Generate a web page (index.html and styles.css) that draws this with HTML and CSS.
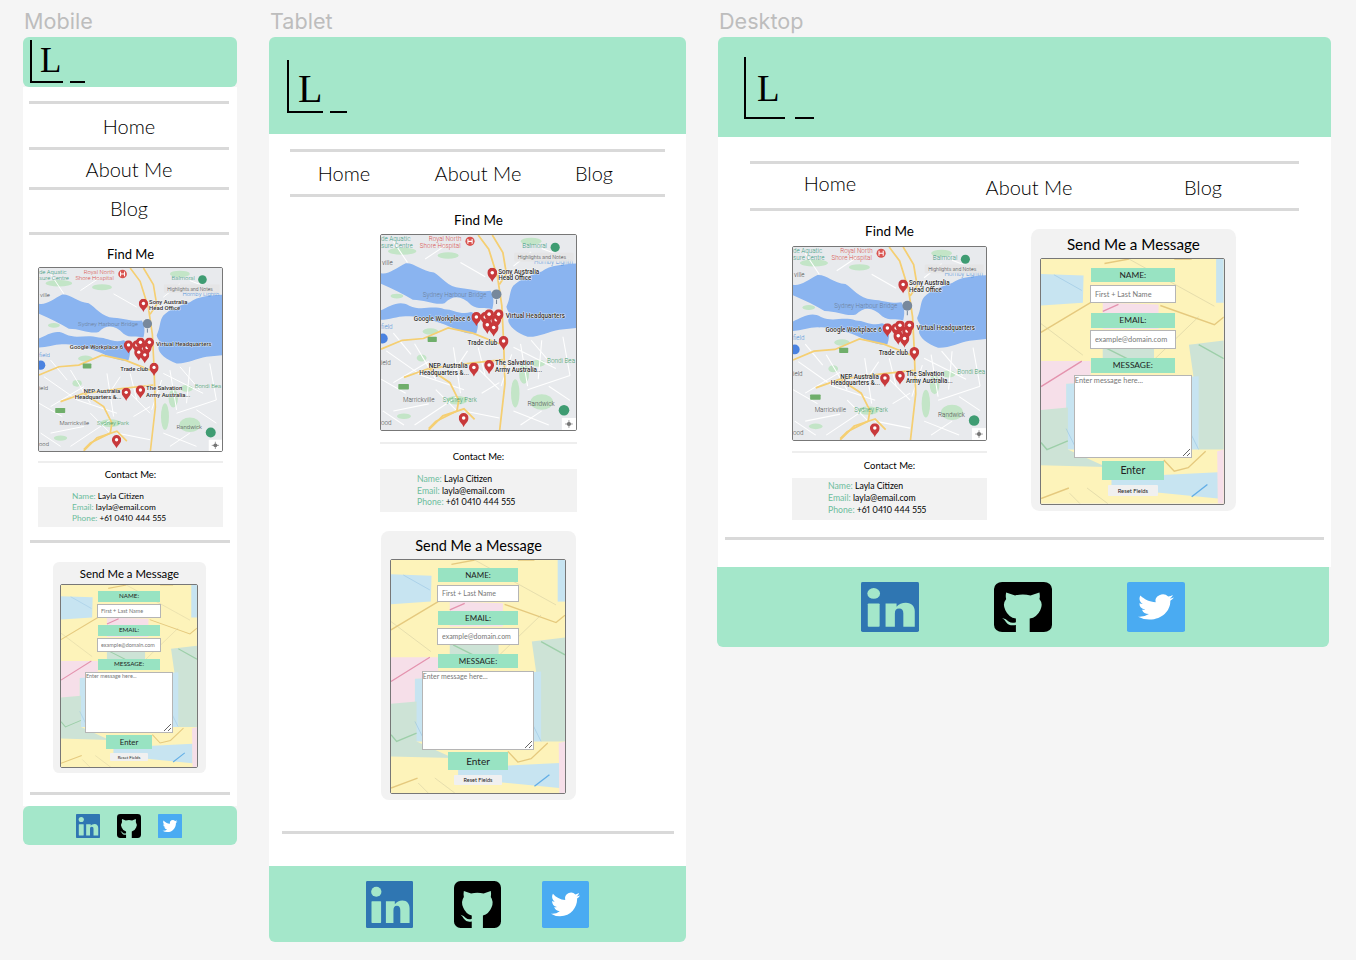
FILE: index.html
```html
<!DOCTYPE html>
<html lang="en">
<head>
  <meta charset="UTF-8" />
  <title>Portfolio wireframes</title>
  <link rel="stylesheet" href="styles.css">
</head>
<body>

  <!-- shared drawings -->
  <svg class="defs" width="0" height="0" aria-hidden="true">
    <filter id="soft"><feGaussianBlur stdDeviation="1.2"/></filter>

    <symbol id="pin" viewBox="0 0 28 40">
      <path d="M14 40C11 30 0 25 0 14a14 14 0 0 1 28 0C28 25 17 30 14 40z" fill="#c8393b"/>
      <circle cx="14" cy="14" r="5" fill="#fff"/>
    </symbol>

    <symbol id="map" viewBox="25 22 552 552" preserveAspectRatio="none">
      <rect x="25" y="22" width="552" height="552" fill="#e8eaed"/>
      <g filter="url(#soft)">
        <!-- parks -->
        <g fill="#c3e5c7">
          <ellipse cx="85" cy="68" rx="40" ry="10"/>
          <ellipse cx="215" cy="80" rx="30" ry="9"/>
          <ellipse cx="450" cy="40" rx="30" ry="10"/>
          <ellipse cx="540" cy="125" rx="25" ry="12"/>
          <ellipse cx="70" cy="195" rx="18" ry="7"/>
          <ellipse cx="165" cy="295" rx="22" ry="9"/>
          <ellipse cx="140" cy="370" rx="14" ry="10"/>
          <ellipse cx="430" cy="415" rx="14" ry="28"/>
          <ellipse cx="405" cy="470" rx="12" ry="40"/>
          <ellipse cx="470" cy="385" rx="20" ry="10"/>
          <ellipse cx="480" cy="495" rx="32" ry="22"/>
          <ellipse cx="240" cy="490" rx="30" ry="12"/>
          <ellipse cx="90" cy="535" rx="20" ry="8"/>
        </g>
        <!-- minor roads -->
        <g fill="none" stroke="#fff" stroke-width="3">
          <path d="M40 350l100 70 120 40M60 440l100-60M120 330l60 100M230 340l20 130M300 400l60 60M400 340l120 60M420 330l20 120M440 460l120-40M400 520l100 40M60 520l100-20M120 560l120-80M450 320l60 70"/>
          <path d="M60 300l50 60M25 430l70 40M270 350l-40 60M300 340l20 80M310 470l50-30M260 520l100 20M395 360l-30 90M480 320l-10 110M540 310l20 110M500 450l60 40M420 560l60-40M30 520l60 40M180 460l60 60"/>
          <path d="M60 40l40 60M150 90l60-40M250 100l70 40M400 110l50-40M480 60l80 30"/>
        </g>
        <!-- water -->
        <g fill="#8ab4f0">
          <path d="M577 103C540 105 505 108 480 125C450 135 420 145 400 165C388 180 392 200 380 225C382 240 398 245 385 262C385 280 410 300 440 310C470 312 500 295 530 290L577 285Z"/>
          <path d="M25 130C45 135 70 115 95 102C120 100 140 125 175 128C195 140 215 170 250 172C285 175 310 185 335 180C345 195 345 215 340 232C320 225 300 235 280 220C255 195 230 190 205 215C180 222 150 205 115 205C90 190 60 175 25 160Z"/>
          <path d="M25 235C50 225 75 205 105 222C140 238 165 220 205 232C230 232 250 250 280 240C300 245 305 270 295 300C270 305 240 290 205 275C170 262 130 250 100 252C75 250 50 262 25 262Z"/>
        </g>
        <!-- main roads -->
        <g fill="none" stroke="#f5cf72" stroke-width="5">
          <path d="M300 22l30 40 25 80 12 80 5 100 4 120-15 132"/>
          <path d="M25 345l60-25 60-5 70-30 70 15 75 30"/>
          <path d="M90 425l70-25 120-15 90-10"/>
          <path d="M160 400l60 40 25 50-5 30-60 30-20 20"/>
          <path d="M160 574l40-40 60-20 30 30"/>
          <path d="M340 22l30 50 10 60-20 30"/>
        </g>
      </g>
      <!-- badges -->
      <rect x="157" y="310" width="26" height="15" rx="2" fill="#6fae6a"/>
      <rect x="74" y="444" width="30" height="15" rx="2" fill="#6fae6a"/>
      <circle cx="277" cy="40" r="13" fill="#d9534f"/>
      <path d="M271 33v14M283 33v14M271 40h12" stroke="#fff" stroke-width="3"/>
      <circle cx="518" cy="57" r="13" fill="#3f9c72"/>
      <circle cx="352" cy="190" r="14" fill="#77889c"/>
      <path d="M352 205v12" stroke="#77889c" stroke-width="3"/>
      <circle cx="30" cy="315" r="14" fill="#4a82e0"/>
      <circle cx="543" cy="518" r="15" fill="#3f9c72"/>
      <!-- place names -->
      <g class="map-label">
        <text x="25" y="40" class="map-teal">de Aquatic</text>
        <text x="25" y="58" class="map-teal">sure Centre</text>
        <text x="160" y="40" class="map-red">Royal North</text>
        <text x="135" y="58" class="map-red">Shore Hospital</text>
        <text x="28" y="108">ville</text>
        <text x="425" y="58" class="map-teal">Balmoral</text>
        <text x="458" y="105" class="map-blue">Hornby Lighth</text>
        <text x="143" y="197" class="map-slate">Sydney Harbour Bridge</text>
        <text x="25" y="289" class="map-blue">field</text>
        <text x="25" y="390">ield</text>
        <text x="495" y="385" class="map-green">Bondi Bea</text>
        <text x="87" y="495">Marrickville</text>
        <text x="200" y="495" class="map-green">Sydney Park</text>
        <text x="440" y="507">Randwick</text>
        <text x="25" y="560">ood</text>
        <text x="357" y="132" class="map-bold">Sony Australia</text>
        <text x="357" y="150" class="map-bold">Head Office</text>
        <text x="118" y="266" class="map-bold">Google Workplace 6</text>
        <text x="378" y="258" class="map-bold">Virtual Headquarters</text>
        <text x="270" y="332" class="map-bold">Trade club</text>
        <text x="160" y="399" class="map-bold">NEP Australia</text>
        <text x="133" y="418" class="map-bold">Headquarters &amp;...</text>
        <text x="348" y="391" class="map-bold">The Salvation</text>
        <text x="348" y="410" class="map-bold">Army Australia...</text>
      </g>
      <!-- pins -->
      <use href="#pin" x="326" y="115" width="28" height="40"/>
      <use href="#pin" x="281" y="240" width="28" height="40"/>
      <use href="#pin" x="306" y="240" width="28" height="40"/>
      <use href="#pin" x="317" y="232" width="28" height="40"/>
      <use href="#pin" x="337" y="248" width="28" height="40"/>
      <use href="#pin" x="344" y="232" width="28" height="40"/>
      <use href="#pin" x="312" y="262" width="28" height="40"/>
      <use href="#pin" x="330" y="270" width="28" height="40"/>
      <use href="#pin" x="358" y="308" width="28" height="40"/>
      <use href="#pin" x="274" y="383" width="28" height="40"/>
      <use href="#pin" x="317" y="376" width="28" height="40"/>
      <use href="#pin" x="245" y="526" width="28" height="40"/>
      <!-- overlays -->
      <rect x="402" y="72" width="168" height="25" rx="3" fill="#e4e4e4" fill-opacity="0.9"/>
      <text x="412" y="90" class="map-note">Highlights and Notes</text>
      <rect x="537" y="540" width="40" height="34" fill="#fff"/>
      <circle cx="557" cy="557" r="6" fill="#777"/>
      <path d="M557 546v22M546 557h22" stroke="#777" stroke-width="2"/>
    </symbol>

    <symbol id="envelopes" viewBox="48 105 524 700" preserveAspectRatio="none">
      <rect x="48" y="105" width="524" height="700" fill="#fdf3ba"/>
      <path d="M550 105h22v125h-22z" fill="#c7e4f1"/>
      <path d="M48 148l122 4-2 78-120 8z" fill="#c7e4f1"/>
      <path d="M225 230l160 5v70H225z" fill="#f6dfe9"/>
      <path d="M225 360h147v30H225z" fill="#cde3d6"/>
      <path d="M472 350l100-12v312h-72l-3-125z" fill="#cde3d6"/>
      <path d="M48 397h142v65h-70v70l-72 7z" fill="#f6dfe9"/>
      <path d="M120 462l380-22v210H120z" fill="#c7e4f1"/>
      <path d="M48 537l77-7v120l110 50-187-5z" fill="#cde3d6"/>
      <path d="M250 730l305-15v75l-305-30z" fill="#c7e4f1"/>
      <path d="M553 655l19-5v155h-17z" fill="#f6dfe9"/>
      <g fill="none" stroke="#e5c97e" stroke-width="4">
        <path d="M48 315l142-85M390 238l155 55 27-22M430 105l50 0M400 680l30 32 40-10 50-47M48 790l80-30M230 118l70-13"/>
      </g>
      <g fill="none" stroke="#cfc9a0" stroke-width="1.5">
        <path d="M300 105l245 135M48 290l120 90M500 270l-125 120M130 775l30 30M180 760l60 45"/>
      </g>
      <g fill="none" stroke="#e493ae" stroke-width="4">
        <path d="M225 255l45-20M48 470l117-73"/>
      </g>
      <g fill="none" stroke="#9dcfa9" stroke-width="4">
        <path d="M48 630l17 20 60-25M235 360l60 30M500 350l72 40"/>
      </g>
      <g fill="none" stroke="#90bfe0" stroke-width="1.5">
        <path d="M85 150l80 45M120 590l30 60M470 590l30 60"/>
      </g>
      <path d="M480 785l45-35" fill="none" stroke="#62aee6" stroke-width="4"/>
    </symbol>

    <symbol id="linkedin" viewBox="0 0 137 140" preserveAspectRatio="none">
      <rect width="137" height="140" rx="4" fill="#2f76b2"/>
      <circle cx="30" cy="32" r="15" fill="#a4e7ca"/>
      <rect x="16" y="60" width="28" height="65" rx="2" fill="#a4e7ca"/>
      <path d="M58 60h26v9c5-7 13-11 22-11 14 0 21 10 21 24v43h-27V88c0-9-3-14-10-14s-10 5-10 14v37H58z" fill="#a4e7ca"/>
    </symbol>

    <symbol id="github" viewBox="0 0 143 142" preserveAspectRatio="none">
      <rect width="143" height="142" rx="20" fill="#000"/>
      <path d="M30 30l22 8q19-5 38 0l22-8q2 12 0 18 10 14 2 32-8 20-26 24v38H54v-20q-16 4-24-8-4-8-10-12 10 2 16 10 8 6 18 2v-10q-18-4-26-24-8-18 2-32-2-8 0-18z" fill="#a4e7ca"/>
    </symbol>

    <symbol id="twitter" viewBox="-7.35 -7.35 38.7 38.7" preserveAspectRatio="none">
      <rect x="-7.35" y="-7.35" width="38.7" height="38.7" rx="1.4" fill="#4aabf2"/>
      <path d="M23.953 4.57a10 10 0 01-2.825.775 4.958 4.958 0 002.163-2.723c-.951.555-2.005.959-3.127 1.184a4.92 4.92 0 00-8.384 4.482C7.69 8.095 4.067 6.13 1.64 3.162a4.822 4.822 0 00-.666 2.475c0 1.71.87 3.213 2.188 4.096a4.904 4.904 0 01-2.228-.616v.06a4.923 4.923 0 003.946 4.827 4.996 4.996 0 01-2.212.085 4.936 4.936 0 004.604 3.417 9.867 9.867 0 01-6.102 2.105c-.39 0-.779-.023-1.17-.067a13.995 13.995 0 007.557 2.209c9.053 0 13.998-7.496 13.998-13.985 0-.21 0-.42-.015-.63A9.935 9.935 0 0024 4.59z" fill="#fff"/>
    </symbol>
  </svg>

  <!-- Mobile -->
  <section class="frame mobile">
    <h2 class="frame-title">Mobile</h2>
    <header class="top">
      <div class="logo"><span class="logo-box">L</span><span class="logo-dash"></span></div>
    </header>
    <div class="page">
      <nav class="nav">
        <a>Home</a>
        <a>About Me</a>
        <a>Blog</a>
      </nav>
      <div class="find">
        <h3>Find Me</h3>
        <svg class="map"><use href="#map"/></svg>
        <h4>Contact Me:</h4>
        <div class="contact">
          <p><span>Name:</span> Layla Citizen</p>
          <p><span>Email:</span> layla@email.com</p>
          <p><span>Phone:</span> +61 0410 444 555</p>
        </div>
      </div>
      <hr class="rule rule-a">
      <div class="card">
        <h3>Send Me a Message</h3>
        <form class="form">
          <svg class="form-bg"><use href="#envelopes"/></svg>
          <label class="label">NAME:</label>
          <input class="input" placeholder="First + Last Name">
          <label class="label">EMAIL:</label>
          <input class="input" placeholder="example@domain.com">
          <label class="label">MESSAGE:</label>
          <textarea class="message" placeholder="Enter message here..."></textarea>
          <button class="enter" type="button">Enter</button>
          <button class="reset" type="button">Reset Fields</button>
        </form>
      </div>
      <hr class="rule rule-b">
    </div>
    <footer class="bottom">
      <svg class="icon"><use href="#linkedin"/></svg>
      <svg class="icon"><use href="#github"/></svg>
      <svg class="icon"><use href="#twitter"/></svg>
    </footer>
  </section>

  <!-- Tablet -->
  <section class="frame tablet">
    <h2 class="frame-title">Tablet</h2>
    <header class="top">
      <div class="logo"><span class="logo-box">L</span><span class="logo-dash"></span></div>
    </header>
    <div class="page">
      <nav class="nav">
        <a>Home</a>
        <a>About Me</a>
        <a>Blog</a>
      </nav>
      <div class="find">
        <h3>Find Me</h3>
        <svg class="map"><use href="#map"/></svg>
        <h4>Contact Me:</h4>
        <div class="contact">
          <p><span>Name:</span> Layla Citizen</p>
          <p><span>Email:</span> layla@email.com</p>
          <p><span>Phone:</span> +61 0410 444 555</p>
        </div>
      </div>
      <div class="card">
        <h3>Send Me a Message</h3>
        <form class="form">
          <svg class="form-bg"><use href="#envelopes"/></svg>
          <label class="label">NAME:</label>
          <input class="input" placeholder="First + Last Name">
          <label class="label">EMAIL:</label>
          <input class="input" placeholder="example@domain.com">
          <label class="label">MESSAGE:</label>
          <textarea class="message" placeholder="Enter message here..."></textarea>
          <button class="enter" type="button">Enter</button>
          <button class="reset" type="button">Reset Fields</button>
        </form>
      </div>
      <hr class="rule rule-b">
    </div>
    <footer class="bottom">
      <svg class="icon"><use href="#linkedin"/></svg>
      <svg class="icon"><use href="#github"/></svg>
      <svg class="icon"><use href="#twitter"/></svg>
    </footer>
  </section>

  <!-- Desktop -->
  <section class="frame desktop">
    <h2 class="frame-title">Desktop</h2>
    <header class="top">
      <div class="logo"><span class="logo-box">L</span><span class="logo-dash"></span></div>
    </header>
    <div class="page">
      <nav class="nav">
        <a>Home</a>
        <a>About Me</a>
        <a>Blog</a>
      </nav>
      <div class="columns">
        <div class="find">
          <h3>Find Me</h3>
          <svg class="map"><use href="#map"/></svg>
          <h4>Contact Me:</h4>
          <div class="contact">
            <p><span>Name:</span> Layla Citizen</p>
            <p><span>Email:</span> layla@email.com</p>
            <p><span>Phone:</span> +61 0410 444 555</p>
          </div>
        </div>
        <div class="card">
          <h3>Send Me a Message</h3>
          <form class="form">
            <svg class="form-bg"><use href="#envelopes"/></svg>
            <label class="label">NAME:</label>
            <input class="input" placeholder="First + Last Name">
            <label class="label">EMAIL:</label>
            <input class="input" placeholder="example@domain.com">
            <label class="label">MESSAGE:</label>
            <textarea class="message" placeholder="Enter message here..."></textarea>
            <button class="enter" type="button">Enter</button>
            <button class="reset" type="button">Reset Fields</button>
          </form>
        </div>
      </div>
      <hr class="rule rule-b">
    </div>
    <footer class="bottom">
      <svg class="icon"><use href="#linkedin"/></svg>
      <svg class="icon"><use href="#github"/></svg>
      <svg class="icon"><use href="#twitter"/></svg>
    </footer>
  </section>

</body>
</html>
```

FILE: styles.css
```css
html, body {
  margin: 0;
  height: 960px;
  overflow: hidden;
}

body {
  position: relative;
  background: #f5f5f5;
  font-family: 'Lato', sans-serif;
  font-weight: 300;
  color: #000;
}

.defs {
  position: absolute;
}

/* artboards sit free on the canvas */
.frame {
  position: absolute;
  top: 8px;
}

.frame-title {
  margin: 0;
  padding-left: 1px;
  height: 29px;
  line-height: 27px;
  font-family: 'Inter', sans-serif;
  font-size: 21.6px;
  font-weight: 400;
  color: #bdbdbd;
}

.top {
  display: flex;
  background: #a4e7ca;
  border-radius: 6px 6px 0 0;
}

.logo {
  display: flex;
  align-items: flex-end;
}

.logo-box {
  display: block;
  box-sizing: border-box;
  border-left: 2px solid #000;
  border-bottom: 2px solid #000;
  font-family: 'Liberation Serif', serif;
  font-weight: 400;
  line-height: 1;
}

.logo-dash {
  display: block;
  height: 2px;
  background: #000;
}

.page {
  box-sizing: border-box;
  background: #fff;
}

.nav {
  font-size: 20px;
  border-top: 3px solid #d9d9d9;
}

.nav a {
  display: flex;
  align-items: center;
  justify-content: center;
}

.find h3,
.card h3 {
  margin: 0;
  font-weight: 400;
  text-align: center;
}

.find h3 {
  font-size: 13.5px;
  line-height: 16px;
}

.map {
  display: block;
  box-sizing: border-box;
  border: 1px solid #777;
  border-radius: 2px;
}

.map-label text {
  font-family: 'Roboto', sans-serif;
  font-size: 18px;
  fill: #4a4a4a;
}

.map-label .map-bold {
  fill: #2c2c2c;
  font-weight: 500;
  paint-order: stroke;
  stroke: #fff;
  stroke-width: 2px;
}

.map-label .map-teal { fill: #3a9a80; }
.map-label .map-red { fill: #d9534f; }
.map-label .map-blue { fill: #4f8fd8; }
.map-label .map-slate { fill: #6c7f98; }
.map-label .map-green { fill: #46a06a; }

.map-note {
  font-family: 'Roboto', sans-serif;
  font-size: 15px;
  fill: #444;
}

.find h4 {
  margin: 0;
  border-top: 2px solid #eee;
  font-size: 9.5px;
  font-weight: 400;
  text-align: center;
}

.contact {
  background: #f2f2f2;
  font-size: 8.7px;
  font-weight: 400;
  font-variant-numeric: proportional-nums;
}

.contact p {
  margin: 0;
}

.contact span {
  color: #6dbd9d;
}

/* form scales with --u */
.card {
  box-sizing: border-box;
  background: #f2f2f2;
  border-radius: calc(var(--u) * 8);
  width: calc(var(--u) * 195);
  height: calc(var(--u) * 269);
  padding-top: calc(var(--u) * 28);
  position: relative;
}

.card h3 {
  position: absolute;
  top: calc(var(--u) * 5);
  left: 0;
  right: 0;
  font-size: calc(var(--u) * 14.5);
  line-height: calc(var(--u) * 20);
}

.form {
  position: relative;
  box-sizing: border-box;
  display: flex;
  flex-direction: column;
  align-items: center;
  width: calc(var(--u) * 176);
  height: calc(var(--u) * 235);
  margin: 0 0 0 calc(var(--u) * 9);
  padding-top: calc(var(--u) * 8);
  border: 1px solid #777;
  border-radius: 2px;
}

.form-bg {
  position: absolute;
  left: 0;
  top: 0;
  width: 100%;
  height: 100%;
}

.label,
.input,
.message,
.enter,
.reset {
  position: relative;
  box-sizing: border-box;
  display: block;
  font-family: 'Lato', sans-serif;
  color: #222;
  flex: none;
}

.label {
  width: calc(var(--u) * 79.5);
  height: calc(var(--u) * 14);
  line-height: calc(var(--u) * 14);
  background: #98e3c2;
  font-size: calc(var(--u) * 8);
  font-weight: 400;
  text-align: center;
}

.input {
  width: calc(var(--u) * 82);
  height: calc(var(--u) * 17.5);
  margin: calc(var(--u) * 2.5) 0 calc(var(--u) * 9);
  padding: 0 calc(var(--u) * 4);
  border: 1px solid #b5b5b5;
  background: #fff;
  font-size: calc(var(--u) * 7);
  font-weight: 400;
}

.message {
  width: calc(var(--u) * 112.5);
  height: calc(var(--u) * 79);
  margin-top: calc(var(--u) * 2.5);
  padding: 0;
  border: 1px solid #b5b5b5;
  border-radius: 0;
  background: #fff;
  font-size: calc(var(--u) * 7);
  font-weight: 400;
  outline: none;
}

.input::placeholder,
.message::placeholder {
  color: #777;
}

.enter {
  width: calc(var(--u) * 59.5);
  height: calc(var(--u) * 18);
  margin-top: calc(var(--u) * 2.5);
  padding: 0;
  border: none;
  background: #98e3c2;
  font-size: calc(var(--u) * 10);
  font-weight: 400;
}

.reset {
  width: calc(var(--u) * 48);
  height: calc(var(--u) * 10);
  margin-top: calc(var(--u) * 5);
  padding: 0;
  border: none;
  border-radius: 1px;
  background: #f0f0f0;
  font-size: calc(var(--u) * 5.5);
  font-weight: 400;
}

.rule {
  margin: 0;
  height: 3px;
  border: none;
  background: #d9d9d9;
}

.bottom {
  display: flex;
  align-items: center;
  justify-content: center;
  background: #a4e7ca;
  border-radius: 0 0 6px 6px;
}

.icon {
  display: block;
}

/* ---- mobile ---- */
.mobile {
  left: 23px;
  width: 214px;
  --u: 0.784px;
}

.mobile .top { height: 50px; border-radius: 6px; }
.mobile .logo { padding: 4px 0 4px 7px; }
.mobile .logo-box { width: 33px; height: 43px; padding: 3px 0 0 8px; font-size: 35px; }
.mobile .logo-dash { width: 15px; margin-left: 7px; }
.mobile .page { padding-top: 14px; height: 719px; }
.mobile .nav { width: 200px; margin-left: 6px; }
.mobile .nav a { border-bottom: 3px solid #d9d9d9; }
.mobile .nav a:nth-child(1) { height: 43px; }
.mobile .nav a:nth-child(2) { height: 36px; padding-top: 1px; }
.mobile .nav a:nth-child(3) { height: 36px; padding-bottom: 6px; }
.mobile .find { width: 185px; margin: 11px auto 0 15px; }
.mobile .find h3 { margin-bottom: 5px; font-size: 13px; }
.mobile .map { width: 185px; height: 185px; }
.mobile .find h4 { margin-top: 9px; padding-top: 6px; line-height: 12px; height: 26px; box-sizing: border-box; }
.mobile .contact { height: 40px; padding: 4px 0 0 34px; box-sizing: border-box; font-size: 8.3px; line-height: 11px; }
.mobile .rule-a { width: 200px; margin: 13px 0 0 7px; }
.mobile .card { margin: 19px 0 0 30px; }
.mobile .rule-b { width: 200px; margin: 19px 0 0 7px; }
.mobile .bottom { height: 39px; gap: 17px; padding-right: 2px; box-sizing: border-box; border-radius: 6px; }
.mobile .icon { width: 24px; height: 24px; }

/* ---- tablet ---- */
.tablet {
  left: 269px;
  width: 417px;
  --u: 1px;
}

.tablet .top { height: 97px; }
.tablet .logo { padding: 0 0 21px 18px; }
.tablet .logo-box { width: 36px; height: 53px; padding: 9px 0 0 9px; font-size: 40px; }
.tablet .logo-dash { width: 17px; margin-left: 7px; }
.tablet .page { padding-top: 15px; height: 732px; }
.tablet .nav {
  display: grid;
  grid-template-columns: 108px 160px 72px;
  width: 375px;
  height: 48px;
  box-sizing: border-box;
  margin-left: 21px;
  border-bottom: 3px solid #d9d9d9;
}
.tablet .find { width: 197px; margin: 15px 0 0 111px; }
.tablet .find h3 { margin-bottom: 6px; }
.tablet .map { width: 197px; height: 197px; }
.tablet .find h4 { margin-top: 11px; padding-top: 7px; line-height: 12px; height: 27px; box-sizing: border-box; }
.tablet .contact { height: 43px; padding: 4px 0 0 37px; box-sizing: border-box; line-height: 11.5px; }
.tablet .card { margin: 19px 0 0 112px; }
.tablet .rule-b { width: 392px; margin: 31px 0 0 13px; }
.tablet .bottom { height: 76px; gap: 41px; }
.tablet .icon { width: 47px; height: 47px; }

/* ---- desktop ---- */
.desktop {
  left: 718px;
  width: 613px;
  --u: 1.05px;
}

.desktop .top { height: 100px; }
.desktop .logo { padding: 0 0 18px 26px; }
.desktop .logo-box { width: 41px; height: 62px; padding: 13px 0 0 11px; font-size: 37px; }
.desktop .logo-dash { width: 19px; margin-left: 10px; }
.desktop .page { padding-top: 24px; height: 430px; }
.desktop .nav {
  display: grid;
  grid-template-columns: 160px 238px 110px;
  width: 549px;
  height: 50px;
  box-sizing: border-box;
  margin-left: 32px;
  border-bottom: 3px solid #d9d9d9;
}
.desktop .nav a { padding-top: 2px; }
.desktop .nav a:first-child { padding-top: 0; padding-bottom: 6px; }
.desktop .columns { display: flex; align-items: flex-start; gap: 44px; margin: 12px 0 0 74px; }
.desktop .find { width: 195px; }
.desktop .find h3 { margin-bottom: 7px; }
.desktop .map { width: 195px; height: 195px; }
.desktop .find h4 { margin-top: 10px; padding-top: 7px; line-height: 12px; height: 27px; box-sizing: border-box; }
.desktop .contact { height: 42px; padding: 2px 0 0 36px; box-sizing: border-box; line-height: 12px; }
.desktop .card { margin-top: 6px; flex: none; }
.desktop .rule-b { width: 599px; margin: 17px 0 0 7px; }
.desktop .bottom { width: 612px; height: 80px; gap: 75px; margin-left: -1px; }
.desktop .icon { width: 58px; height: 50px; }
```
